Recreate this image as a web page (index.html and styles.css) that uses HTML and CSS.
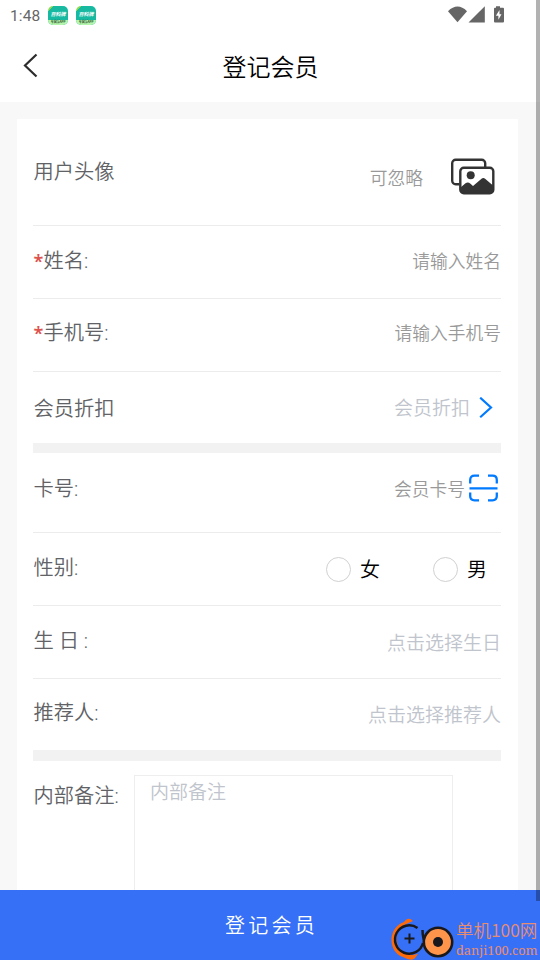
FILE: index.html
```html
<!DOCTYPE html>
<html lang="zh-CN">
<head>
<meta charset="utf-8">
<title>登记会员</title>
<link rel="stylesheet" href="styles.css">
</head>
<body>
<div class="app">
  <header class="statusbar">
    <span class="clock">1:48</span>
    <div class="badge"><span class="badge-name">百科牌</span><span class="badge-sub">专营版APP</span></div>
    <div class="badge"><span class="badge-name">百科牌</span><span class="badge-sub">专营版APP</span></div>
    <svg class="status-icons" width="60" height="20" viewBox="0 0 60 20"><path d="M0 5.200Q9.500-4 19 5.200L9.500 16.200Z"/><path d="M20.500 16.500L36.800.2v16.300z"/><path d="M48 1.700V.2h4v1.500h3a1 1 0 0 1 1 1v12.800a1 1 0 0 1-1 1h-8a1 1 0 0 1-1-1V2.700a1 1 0 0 1 1-1z"/><path class="bolt" d="M51.500 4L47.900 9.800h2.500v4L53.500 8.300h-2z"/></svg>
  </header>
  <nav class="navbar">
    <svg class="back" width="16" height="26" viewBox="0 0 16 26"><path d="M13.500 1.500L2 12.500l11.500 11"/></svg>
    <h1>登记会员</h1>
  </nav>
  <main class="page">
    <section class="card">
      <div class="row avatar-row"><span class="label">用户头像</span><span class="hint">可忽略</span>
        <svg class="photo" width="46" height="38" viewBox="0 0 46 38"><path class="frame" d="M9.500 26.300H5.700a3.500 3.500 0 0 1-3.500-3.500V5.200a3.500 3.500 0 0 1 3.500-3.500h26a3.500 3.500 0 0 1 3.500 3.500v4"/><rect class="frame" x="10.300" y="9.700" width="33" height="25.500" rx="3.500"/><circle cx="20.700" cy="17.200" r="4"/><path d="M10.500 29.500l5-4.200q2.500-1.800 5 .5l2.500 2.200 8.500-7.200q1.800-1.500 3.600 0l8.500 7.200v5q0 1.500-2 1.500H12.500q-2 0-2-1.500z"/></svg>
      </div>
      <div class="row name-row"><span class="label"><b class="star">*</b>姓名:</span><span class="hint">请输入姓名</span></div>
      <div class="row phone-row"><span class="label"><b class="star">*</b>手机号:</span><span class="hint">请输入手机号</span></div>
      <div class="row discount-row"><span class="label">会员折扣</span><span class="pick">会员折扣</span><svg class="chevron" width="14" height="22" viewBox="0 0 14 22"><path d="M1.200 .7L12 10.500 1.200 20.300"/></svg></div>
      <div class="divider"></div>
      <div class="row card-row"><span class="label">卡号:</span><span class="hint">会员卡号</span><svg class="scan" width="30" height="28" viewBox="0 0 30 28"><path d="M1.200 9.500V6q0-4.300 4.300-4.300H10M19 1.700h4.500q4.300 0 4.300 4.300v3.500M1.200 18.500v3.500q0 4.300 4.300 4.300H10M19 26.300h4.500q4.300 0 4.300-4.300v-3.500M.5 14.300h28"/></svg></div>
      <div class="row sex-row"><span class="label">性别:</span><div class="radios"><span class="radio"><i></i>女</span><span class="radio"><i></i>男</span></div></div>
      <div class="row birth-row"><span class="label">生 日 :</span><span class="pick">点击选择生日</span></div>
      <div class="row ref-row"><span class="label">推荐人:</span><span class="pick">点击选择推荐人</span></div>
      <div class="divider thick"></div>
      <div class="notes"><span class="label">内部备注:</span><div class="textarea">内部备注</div></div>
    </section>
  </main>
  <footer class="submit">登记会员</footer>
  <div class="scrollbar"></div>
  <div class="watermark">
    <svg width="66" height="42" viewBox="0 0 66 42"><path class="arc" d="M22 3Q17-2 13 4C-4 10-3 34 12 39q9 5 12 1l3-4-6 1C2 35 1 12 15 6z"/><path class="ring" d="M26.500 10A14.200 14.200 0 1 0 32 25M31.500 12q0 9 3.500 14M38 16q2-4 4.500-4"/><path class="plus" d="M18.500 15.500v10M13.500 20.500h10"/><circle class="disc" cx="47" cy="24" r="14.200"/><circle cx="47" cy="24" r="5"/></svg>
    <div class="mark-text"><span class="site">单机100网</span><span class="domain">danji100.com</span></div>
  </div>
</div>
</body>
</html>
```
FILE: styles.css
```css
* { box-sizing: border-box; }
body { margin: 0; font-family: "Noto Sans CJK SC DemiLight", "Noto Sans CJK SC", sans-serif; font-weight: 350; }
.app { position: relative; width: 540px; height: 960px; display: flex; flex-direction: column; overflow: hidden; background: #f8f8f8; }
.statusbar { display: flex; align-items: flex-start; height: 30px; padding: 6px 32px 0 10px; background: #fff; flex: none; }
.clock { width: 38px; font: 400 15.5px/20px Roboto, sans-serif; letter-spacing: .1px; color: #666; }
.badge { width: 20px; height: 19px; margin-right: 8px; border-radius: 5px; background: linear-gradient(135deg, #8edb50 0 14%, #17b9a1 15%); overflow: hidden; color: #fff; text-align: center; display: flex; flex-direction: column; }
.badge-name { height: 14px; font-size: 5px; font-weight: 700; line-height: 15px; font-style: italic; }
.badge-sub { height: 5px; background: #b5f5ac; color: #163a20; font-size: 3px; font-weight: 900; line-height: 4px; }
.status-icons { margin-left: auto; fill: #666; }
.status-icons .bolt { fill: #fff; }
.navbar { display: flex; align-items: center; height: 72px; padding: 0 23px; background: #fff; flex: none; }
.back { fill: none; stroke: #2c2c2c; stroke-width: 2.2; }
h1 { flex: 1; margin: 0 15px 1px 0; text-align: center; font-size: 24px; font-weight: 350; line-height: 36px; color: #000; }
.page { height: 788px; padding: 17px 22px 0 17px; overflow: hidden; flex: none; }
.card { height: 860px; padding: 0 17px 0 16px; background: #fff; }
.row { display: flex; align-items: flex-start; height: 73px; border-bottom: 1px solid #ececec; }
.label { margin: 21px auto 0 0; padding-left: .5px; font-family: Roboto, "Noto Sans CJK SC", sans-serif; font-size: 20.25px; line-height: 28px; color: #606266; white-space: pre; }
.star { display: inline-block; width: 10px; height: 22px; vertical-align: top; font-family: "Noto Sans", sans-serif; font-size: 18px; color: #dd524d; font-weight: 600; }
.hint { margin-top: 20px; font-size: 17.75px; line-height: 28px; color: #999; }
.pick { margin-top: 20px; font-size: 19px; line-height: 28px; color: #c0c4cc; }
.avatar-row { height: 107px; }
.avatar-row .label { margin-top: 39px; }
.avatar-row .hint { margin-top: 44px; }
.photo { margin: 39px 5px 0 27px; fill: #333; flex: none; }
.frame { fill: none; stroke: #333; stroke-width: 2.4; }
.phone-row .label { margin-top: 20px; }
.phone-row .hint { margin-top: 19px; }
.discount-row, .ref-row { height: 71px; border: 0; }
.discount-row .label { margin-top: 23px; }
.discount-row .pick { margin-top: 21px; }
.chevron { margin: 25px 8px 0 9px; fill: none; stroke: #007aff; stroke-width: 2.2; }
.divider { height: 10px; background: #f2f2f2; }
.divider.thick { height: 11px; }
.card-row { height: 80px; }
.card-row .label { margin-top: 22px; }
.card-row .hint { margin-top: 21px; }
.scan { margin: 21px 2px 0 4px; fill: none; stroke: #007aff; stroke-width: 2.3; }
.radios { display: flex; gap: 53px; margin: 22px 14px 0 0; }
.radio { display: flex; align-items: flex-start; gap: 9px; font-size: 20px; line-height: 28px; color: #000; }
.radio i { width: 25px; height: 25px; margin-top: 2px; border: 1px solid #d1d1d1; border-radius: 50%; }
.birth-row .pick { margin-top: 22px; }
.ref-row .label { margin-top: 20px; }
.ref-row .pick { margin-top: 21px; }
.notes { display: flex; align-items: flex-start; padding-top: 14px; }
.notes .label { width: 101px; margin: 7px 0 0; }
.textarea { width: 319px; height: 180px; padding: 0 15px; border: 1px solid #eee; font-size: 19px; line-height: 30px; color: #c0c4cc; }
.submit { height: 70px; background: #3670f7; color: #fff; text-align: center; font-size: 20px; font-weight: 350; line-height: 69px; letter-spacing: 3.3px; flex: none; padding-left: 3px; }
.scrollbar { position: absolute; right: 0; top: 0; width: 4px; height: 901px; background: rgba(0, 0, 0, .3); }
.watermark { position: absolute; left: 391px; top: 918px; display: flex; fill: #19181d; }
.arc { fill: #ff6a08; }
.ring, .plus { fill: none; stroke: #19181d; stroke-width: 2.5; }
.plus { stroke-width: 2; }
.disc { fill: #ff944b; stroke: #19181d; stroke-width: 2.6; }
.mark-text { display: flex; flex-direction: column; margin-left: -1px; color: #e98d70; white-space: nowrap; }
.site { font-size: 17.5px; font-weight: 400; line-height: 24px; }
.domain { font-family: "Noto Serif", "DejaVu Serif", serif; font-size: 12.8px; font-weight: 400; line-height: 16px; }
```
